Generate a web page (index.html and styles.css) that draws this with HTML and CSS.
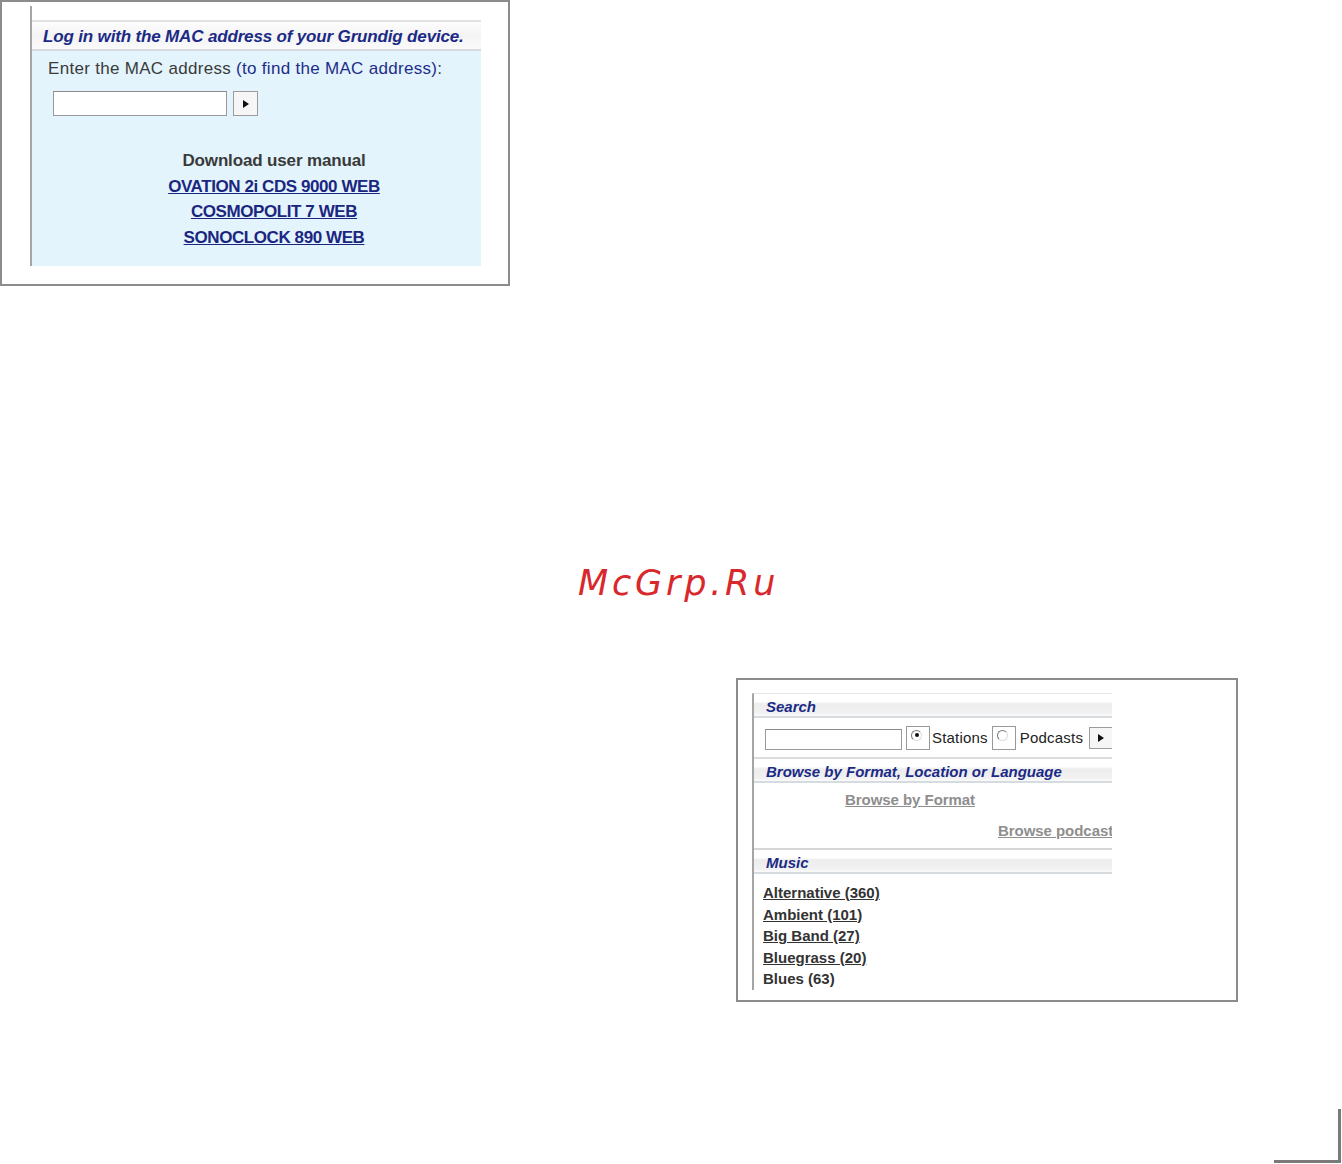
FILE: index.html
```html
<!DOCTYPE html>
<html>
<head>
<meta charset="utf-8">
<link rel="stylesheet" href="styles.css">
</head>
<body>
<div class="page">
  <div class="shot shot-login">
    <div class="panel login-panel">
      <div class="top-gap"></div>
      <div class="sect-head login-head">Log in with the MAC address of your Grundig device.</div>
      <div class="login-body">
        <div class="mac-label">Enter the MAC address <a class="mac-help">(to find the MAC address)</a>:</div>
        <div class="mac-row">
          <span class="txt-input mac-input"></span>
          <span class="go-btn"><svg width="8" height="10" viewBox="0 0 8 10"><path d="M1 1 L7 5 L1 9 Z" fill="#111"/></svg></span>
        </div>
        <div class="manuals">
          <div class="manual-title">Download user manual</div>
          <a class="manual-link">OVATION 2i CDS 9000 WEB</a>
          <a class="manual-link">COSMOPOLIT 7 WEB</a>
          <a class="manual-link">SONOCLOCK 890 WEB</a>
        </div>
      </div>
    </div>
  </div>

  <div class="watermark">McGrp.Ru</div>

  <div class="shot shot-search">
    <div class="panel search-panel">
      <div class="sect-head small-head">Search</div>
      <div class="search-row">
        <span class="txt-input search-input"></span>
        <span class="radio-box"><span class="radio on"></span></span>
        <span class="radio-label">Stations</span>
        <span class="radio-box"><span class="radio"></span></span>
        <span class="radio-label">Podcasts</span>
        <span class="go-btn small-go"><svg width="8" height="10" viewBox="0 0 8 10"><path d="M1 1 L7 5 L1 9 Z" fill="#111"/></svg></span>
      </div>
      <div class="sect-head small-head">Browse by Format, Location or Language</div>
      <div class="browse-body">
        <a class="browse-link bl-format">Browse by Format</a>
        <a class="browse-link bl-podcast">Browse podcast</a>
      </div>
      <div class="sect-head small-head">Music</div>
      <ul class="genres">
        <li><a>Alternative (360)</a></li>
        <li><a>Ambient (101)</a></li>
        <li><a>Big Band (27)</a></li>
        <li><a>Bluegrass (20)</a></li>
        <li><span>Blues (63)</span></li>
      </ul>
    </div>
  </div>

  <div class="corner-mark"></div>
</div>
</body>
</html>
```

FILE: styles.css
```css
html, body {
  margin: 0;
  padding: 0;
  background: #fff;
}
.page {
  position: relative;
  width: 1342px;
  height: 1164px;
  font-family: "Liberation Sans", Arial, sans-serif;
  overflow: hidden;
}
a { cursor: pointer; }

.shot {
  box-sizing: border-box;
  border: 2px solid #8c8c8c;
  background: #fff;
}

/* ---------- login screenshot ---------- */
.shot-login {
  width: 510px;
  height: 286px;
  padding: 4px 0 0 28px;
}
.panel {
  border-left: 2px solid #a5a5a5;
}
.login-panel {
  width: 449px;
  height: 260px;
  display: flex;
  flex-direction: column;
}
.top-gap {
  height: 14px;
  border-bottom: 2px solid #e2e2e2;
}
.sect-head {
  font-weight: bold;
  font-style: italic;
  color: #1b2a86;
  background: linear-gradient(#fdfdfd 0%, #f4f4f4 50%, #fafafa 100%);
  border-bottom: 2px solid #d6dbdf;
}
.login-head {
  height: 27px;
  line-height: 29px;
  font-size: 17px;
  padding-left: 11px;
  letter-spacing: -0.16px;
  white-space: nowrap;
}
.login-body {
  flex: 1;
  background: #e3f4fc;
  padding: 8px 0 0 16px;
}
.mac-label {
  font-size: 17px;
  color: #3a3a3a;
  line-height: 20px;
  letter-spacing: 0.3px;
  white-space: nowrap;
}
.mac-help {
  color: #1d2d8a;
}
.mac-row {
  display: flex;
  gap: 6px;
  margin: 12px 0 0 5px;
}
.txt-input {
  box-sizing: border-box;
  display: block;
  background: #fff;
  border: 1px solid #9a9a9a;
  border-top-color: #8a8a8a;
}
.mac-input {
  width: 174px;
  height: 25px;
}
.go-btn {
  box-sizing: border-box;
  width: 25px;
  height: 25px;
  border: 1px solid #9c9c9c;
  background: #f6f6f6;
  display: flex;
  align-items: center;
  justify-content: center;
}
.manuals {
  display: flex;
  flex-direction: column;
  align-items: center;
  margin-top: 32px;
  padding-left: 19px;
  font-size: 17px;
  line-height: 25.5px;
}
.manual-title {
  color: #3a3a3a;
  font-weight: bold;
  letter-spacing: -0.15px;
}
.manual-link {
  color: #1b2680;
  font-weight: bold;
  text-decoration: underline;
  letter-spacing: -0.42px;
}

/* ---------- watermark ---------- */
.watermark {
  margin: 277px 0 0 578px;
  width: 240px;
  font-family: "DejaVu Sans", sans-serif;
  font-style: italic;
  font-size: 35px;
  line-height: 40px;
  color: #d9282c;
  letter-spacing: 3.8px;
}

/* ---------- search screenshot ---------- */
.shot-search {
  width: 502px;
  height: 324px;
  margin: 75px 0 0 736px;
  padding: 13px 0 0 14px;
}
.search-panel {
  width: 358px;
  height: 296px;
  overflow: hidden;
  border-top: 1px solid #e6e6e6;
}
.small-head {
  height: 22px;
  line-height: 25px;
  font-size: 15px;
  padding-left: 12px;
  white-space: nowrap;
  background: linear-gradient(#ffffff 0%, #ffffff 35%, #ededed 45%, #f1f1f1 85%, #fafafa 100%);
}
.search-row {
  height: 39px;
  display: flex;
  align-items: center;
  padding-left: 11px;
  border-bottom: 2px solid #dcdcdc;
  font-size: 15px;
  color: #222;
  white-space: nowrap;
}
.search-input {
  width: 137px;
  height: 21px;
  margin-top: 3px;
  flex-shrink: 0;
}
.radio-box {
  box-sizing: border-box;
  width: 24px;
  height: 24px;
  border: 1px solid #999;
  margin-left: 4px;
  position: relative;
  flex-shrink: 0;
}
.radio {
  position: absolute;
  left: 4px;
  top: 3px;
  width: 11px;
  height: 11px;
  border-radius: 50%;
  box-sizing: border-box;
  border: 1px solid #777;
  border-right-color: #ddd;
  border-bottom-color: #ddd;
  background: #fff;
}
.radio.on::after {
  content: "";
  position: absolute;
  left: 2.5px;
  top: 2.5px;
  width: 4px;
  height: 4px;
  border-radius: 50%;
  background: #111;
}
.radio-label {
  margin-left: 2px;
  letter-spacing: 0.2px;
}
.radio-label + .radio-box { margin-left: 4px; }
.radio-box + .radio-label + .radio-box + .radio-label { margin-left: 4px; }
.small-go {
  width: 26px;
  height: 22px;
  margin-left: 6px;
  flex-shrink: 0;
  justify-content: flex-start;
  padding-left: 7px;
}
.browse-body {
  box-sizing: border-box;
  height: 67px;
  padding-top: 8px;
  border-bottom: 2px solid #d6d6d6;
  font-size: 15px;
}
.browse-link {
  display: block;
  color: #8e8e8e;
  font-weight: bold;
  text-decoration: underline;
  white-space: nowrap;
  letter-spacing: -0.05px;
}
.bl-format {
  margin-left: 91px;
}
.bl-podcast {
  margin: 14px 0 0 244px;
}
.genres {
  list-style: none;
  margin: 0;
  padding: 8px 0 0 9px;
  font-size: 15px;
  line-height: 21.5px;
  font-weight: bold;
  color: #333;
}
.genres a {
  color: #333;
  text-decoration: underline;
}

/* ---------- page corner mark ---------- */
.corner-mark {
  position: absolute;
  right: 1px;
  bottom: 1px;
  width: 64px;
  height: 51px;
  border-right: 3px solid #7a7a7a;
  border-bottom: 3px solid #7a7a7a;
}
```
